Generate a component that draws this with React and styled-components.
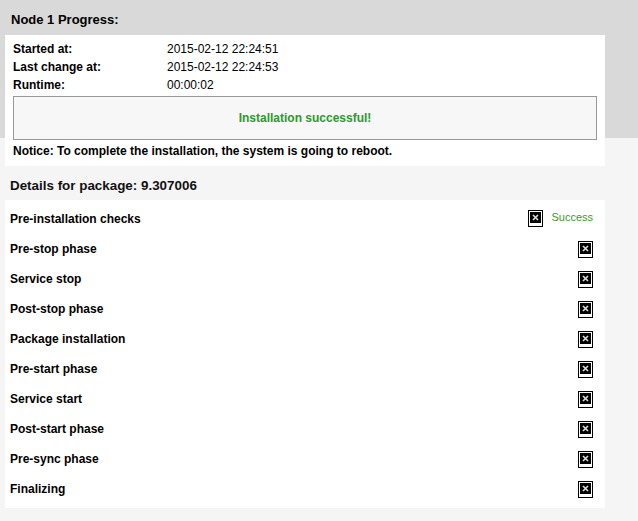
import React from "react";
import styled, { createGlobalStyle } from "styled-components";

const Global = createGlobalStyle`
  html, body { margin: 0; padding: 0; }
  body {
    background: #f5f5f5;
    font-family: "Liberation Sans", Arial, sans-serif;
    color: #000;
  }
`;

const Page = styled.div`
  width: 638px;
  min-height: 521px;
  background: linear-gradient(#d9d9d9, #d9d9d9) top / 100% 138px no-repeat, #f5f5f5;
  padding: 0 0 13px 0;
  box-sizing: border-box;
`;

const Title = styled.div`
  font-size: 13px;
  font-weight: bold;
  padding: 12px 0 0 11px;
  height: 35px;
  box-sizing: border-box;
`;

const Panel = styled.div`
  margin-left: 5px;
  width: 600px;
  background: #fff;
  box-sizing: border-box;
  padding: ${(p) => p.$pad};
`;

const InfoGrid = styled.div`
  display: grid;
  grid-template-columns: 154px 1fr;
  font-size: 12px;
  line-height: 18px;
`;

const Label = styled.div`
  font-weight: bold;
`;

const Value = styled.div``;

const ResultBox = styled.div`
  margin-top: 2px;
  height: 42px;
  border: 1px solid #999;
  background: #f7f7f7;
  display: flex;
  align-items: center;
  justify-content: center;
  color: #2c9a2c;
  font-weight: bold;
  font-size: 12px;
`;

const Notice = styled.div`
  font-weight: bold;
  font-size: 12px;
  line-height: 18px;
  margin-top: 2px;
  margin-bottom: 2px;
`;

const SubTitle = styled.div`
  font-size: 13.4px;
  font-weight: bold;
  padding: 12px 0 0 10px;
  height: 34px;
  box-sizing: border-box;
  color: #111;
`;

const Row = styled.div`
  height: 30px;
  display: flex;
  align-items: center;
  justify-content: space-between;
  padding: 0 12px 0 5px;
  font-size: 12px;
  font-weight: bold;
`;

const Status = styled.div`
  display: flex;
  align-items: center;
  gap: 8px;
  font-weight: normal;
  font-size: 11px;
  color: #3a9a2a;
  margin-top: ${(p) => (p.$raised ? "-2px" : "0")};
`;

const StatusText = styled.span`
  position: relative;
  top: -1px;
`;

const BrokenIcon = () => (
  <svg width="15" height="17" viewBox="0 0 15 17">
    <rect x="0.5" y="0.5" width="14" height="16" fill="#fff" stroke="#000" />
    <rect x="2" y="2" width="11" height="11" fill="#000" />
    <path d="M5 5 L10 10 M10 5 L5 10" stroke="#ddd" strokeWidth="1.6" />
  </svg>
);

const phases = [
  "Pre-installation checks",
  "Pre-stop phase",
  "Service stop",
  "Post-stop phase",
  "Package installation",
  "Pre-start phase",
  "Service start",
  "Post-start phase",
  "Pre-sync phase",
  "Finalizing",
];

export default function App() {
  return (
    <Page>
      <Global />
      <Title>Node 1 Progress:</Title>
      <Panel $pad="5px 8px 4px 8px">
        <InfoGrid>
          <Label>Started at:</Label>
          <Value>2015-02-12 22:24:51</Value>
          <Label>Last change at:</Label>
          <Value>2015-02-12 22:24:53</Value>
          <Label>Runtime:</Label>
          <Value>00:00:02</Value>
        </InfoGrid>
        <ResultBox>Installation successful!</ResultBox>
        <Notice>Notice: To complete the installation, the system is going to reboot.</Notice>
      </Panel>
      <SubTitle>Details for package: 9.307006</SubTitle>
      <Panel $pad="4px 0 4px 0">
        {phases.map((p, i) => (
          <Row key={p}>
            <span>{p}</span>
            <Status $raised={i === 0}>
              <BrokenIcon />
              {i === 0 && <StatusText>Success</StatusText>}
            </Status>
          </Row>
        ))}
      </Panel>
    </Page>
  );
}
